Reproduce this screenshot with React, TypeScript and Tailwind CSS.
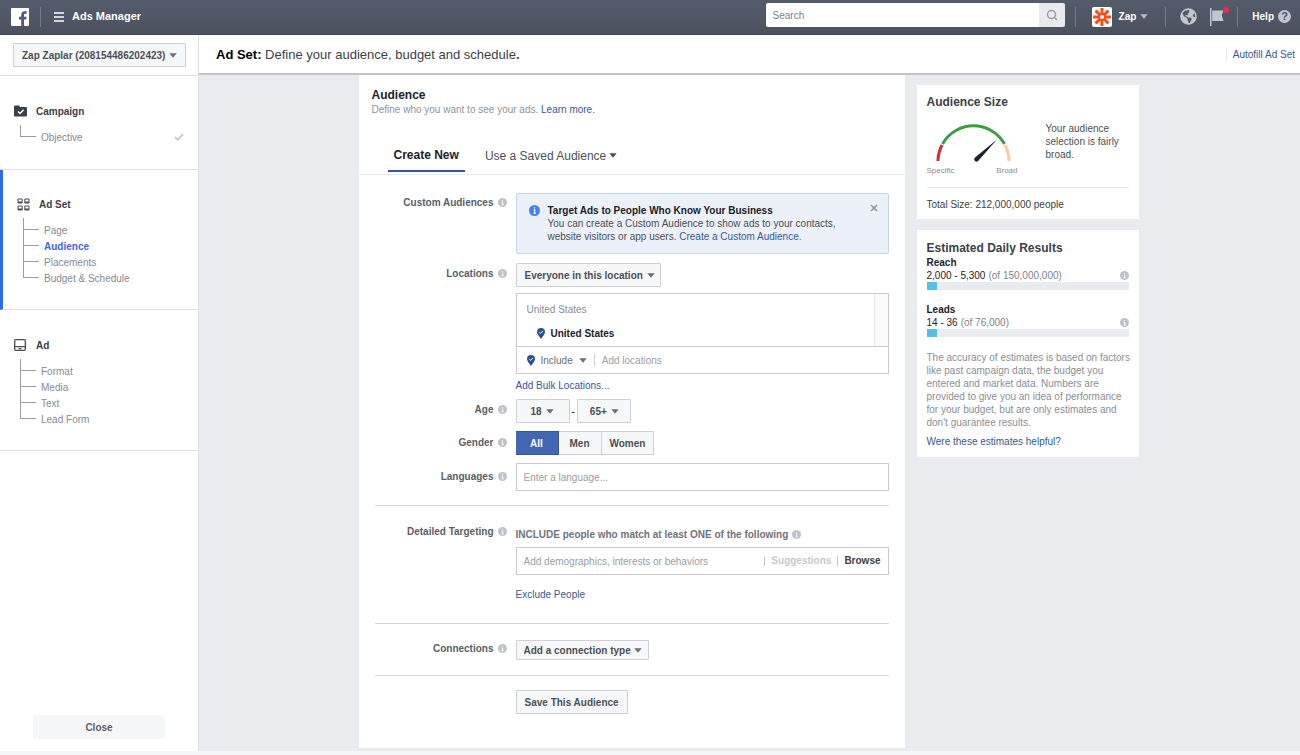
import type { ReactNode } from "react";
import { Search } from "lucide-react";
import { FaGlobeAmericas } from "react-icons/fa";

// ---------------------------------------------------------------------------
// Small shared pieces
// ---------------------------------------------------------------------------

function Caret({ className = "" }: { className?: string }) {
  return (
    <svg viewBox="0 0 8 5" className={`h-[5px] w-2 fill-current ${className}`}>
      <path d="M0.3 0.3h7.4L4 4.7z" />
    </svg>
  );
}

function InfoIcon({ className = "size-[9px] text-[#bec2c9]" }: { className?: string }) {
  return (
    <svg viewBox="0 0 10 10" className={`shrink-0 ${className}`}>
      <circle cx="5" cy="5" r="5" fill="currentColor" />
      <path
        d="M5 2.1v1.1M4.2 4.5h1v3M4 7.7h2.2"
        stroke="#fff"
        strokeWidth="1.1"
        fill="none"
      />
    </svg>
  );
}

function PinIcon() {
  return (
    <svg viewBox="0 0 8 11" className="h-[11px] w-2 shrink-0">
      <path
        d="M4 0a4 4 0 0 1 4 4c0 2.4-2.6 4.4-4 7C2.6 8.4 0 6.4 0 4a4 4 0 0 1 4-4z"
        fill="#2f4f94"
      />
      <path d="M2.2 4l1.4 1.4L6 2.8" stroke="#fff" fill="none" />
    </svg>
  );
}

interface DropdownProps {
  id?: string;
  label: string;
  options: string[];
  className: string;
  caretClassName: string;
}

function Dropdown({ id, label, options, className, caretClassName }: DropdownProps) {
  return (
    <div className="relative inline-flex items-center">
      <select
        id={id}
        aria-label={label}
        className={`appearance-none rounded-[1px] border border-[#ced0d4] bg-[#f6f7f9] font-bold text-[#4b4f56] ${className}`}
      >
        {options.map((option) => (
          <option key={option}>{option}</option>
        ))}
      </select>
      <Caret
        className={`pointer-events-none absolute text-[#6a6e76] ${caretClassName}`}
      />
    </div>
  );
}

// ---------------------------------------------------------------------------
// Top bar
// ---------------------------------------------------------------------------

function TopBar() {
  return (
    <header className="flex h-[35px] items-center border-b border-[#434956] bg-linear-to-b from-[#545c6c] to-[#4c515e] pr-[9px] pb-px pl-[11px] font-bold text-white">
      <a href="#" aria-label="Facebook">
        <svg viewBox="0 0 18 18" className="size-[18px]">
          <rect width="18" height="18" rx="1" fill="#fff" />
          <path
            d="M10.2 18v-6.6H8V8.7h2.2V6.9c0-2.4 1.4-3.7 3.6-3.7.9 0 1.6.1 1.9.1v2.4h-1.3c-1.2 0-1.4.6-1.4 1.4v1.6h2.6l-.4 2.7H13V18z"
            fill="#4a5a86"
          />
        </svg>
      </a>
      <span className="ml-[11px] h-5 w-px bg-[#747b89]" />
      <button aria-label="Menu" className="ml-[13px]">
        <svg viewBox="0 0 10 10" className="size-[10px]">
          <path d="M0 1h10M0 5h10M0 9h10" stroke="#fff" strokeWidth="1.4" />
        </svg>
      </button>
      <span className="ml-2 text-[11px]">Ads Manager</span>

      <form className="mb-[3px] ml-auto flex h-6">
        <input
          aria-label="Search"
          placeholder="Search"
          className="w-[273px] rounded-l-xs bg-white px-[7px] font-normal text-gray-800 placeholder:text-[#7b7f86]"
        />
        <button
          type="button"
          aria-label="Submit search"
          className="flex w-[26px] items-center justify-center rounded-r-xs bg-[#e9eaed] text-[#9a9da3]"
        >
          <Search className="size-3" strokeWidth={3} />
        </button>
      </form>
      <span className="ml-[10px] h-5 w-px bg-[#747b89]" />
      <button className="ml-4 flex items-center">
        <svg viewBox="0 0 20 20" className="size-5">
          <rect width="20" height="20" rx="2" fill="#fff" />
          <path
            d="M10 1v18M1 10h18M3.600 3.600l12.800 12.800M16.400 3.600L3.600 16.400"
            stroke="#f4501e"
            strokeWidth="3"
          />
          <circle cx="10" cy="10" r="2" fill="#fff" />
        </svg>
        <span className="ml-[7px]">Zap</span>
        <Caret className="ml-1 text-[#b9bdc6]" />
      </button>
      <span className="ml-[17px] h-5 w-px bg-[#747b89]" />
      <button aria-label="Notifications" className="ml-[14px] text-[#c3c6cd]">
        <FaGlobeAmericas className="size-[17px]" />
      </button>
      <button aria-label="Account alerts" className="relative ml-3">
        <svg viewBox="0 0 16 18" className="h-[18px] w-4">
          <path
            d="M1 0h1.500v18H1zM3.200 2.500H14.500l-1.800 4.800L14.500 13H3.200z"
            fill="#c3c6cd"
          />
        </svg>
        <span className="absolute -top-px -right-1 size-[6px] rounded-full bg-[#f02849]" />
      </button>
      <span className="ml-3 h-5 w-px bg-[#747b89]" />
      <button className="ml-[14px] flex items-center gap-1">
        Help
        <span className="flex size-[13px] items-center justify-center rounded-full bg-[#c3c6cd] text-[11px] leading-none text-[#4e5462]">
          ?
        </span>
      </button>
    </header>
  );
}

// ---------------------------------------------------------------------------
// Sidebar
// ---------------------------------------------------------------------------

interface StepProps {
  title: string;
  icon: ReactNode;
  items: string[];
  active?: string;
  done?: string;
  className: string;
}

function Step({ title, icon, items, active, done, className }: StepProps) {
  return (
    <section className={`border-b border-[#dddfe2] pr-[14px] ${className}`}>
      <h2 className="flex h-4 items-center font-bold text-[#3c4048]">
        {icon}
        {title}
      </h2>
      <ul className="ml-[6px]">
        <li aria-hidden className="mt-[6px] h-1 border-l border-[#9a9da4]" />
        {items.map((item, idx) => (
          <li key={item} className="flex h-4 items-center">
            <span className="mr-[5px] flex w-4 flex-col">
              <span className="h-2 border-b border-l border-[#9a9da4]" />
              <span
                className={
                  idx < items.length - 1 ? "h-2 border-l border-[#9a9da4]" : "h-2"
                }
              />
            </span>
            <a
              href="#"
              className={
                item === active ? "font-bold text-[#3b66e8]" : "text-[#858a93]"
              }
            >
              {item}
            </a>
            {item === done && (
              <svg viewBox="0 0 10 8" className="ml-auto h-2 w-[10px]">
                <path
                  d="M1 4l2.800 2.800L9 1.200"
                  stroke="#c4c7cc"
                  strokeWidth="1.800"
                  fill="none"
                />
              </svg>
            )}
          </li>
        ))}
      </ul>
    </section>
  );
}

function Sidebar() {
  return (
    <aside className="flex w-[199px] shrink-0 flex-col border-r border-[#dcdee2] bg-white">
      <div className="flex h-[41px] items-center border-b border-[#dddfe2] pl-[13px]">
        <Dropdown
          label="Account"
          options={["Zap Zaplar (208154486202423)"]}
          className="h-6 w-[173px] pl-2"
          caretClassName="right-[9px]"
        />
      </div>
      <nav>
        <Step
          title="Campaign"
          items={["Objective"]}
          done="Objective"
          className="h-[94px] pt-[27px] pl-[14px]"
          icon={
            <svg viewBox="0 0 13 12" className="mr-[9px] h-3 w-[13px]">
              <path
                d="M0 1.500Q0 .5 1 .5h4l1.200 1.500H12q1 0 1 1v7.500q0 1-1 1H1q-1 0-1-1z"
                fill="#3c4048"
              />
              <path
                d="M4 6.500l2 2 3.600-3.800"
                stroke="#fff"
                strokeWidth="1.300"
                fill="none"
              />
            </svg>
          }
        />
        <Step
          title="Ad Set"
          items={["Page", "Audience", "Placements", "Budget & Schedule"]}
          active="Audience"
          className="h-[140px] border-l-3 border-l-[#2d6be8] pt-[26px] pl-[14px]"
          icon={
            <svg
              viewBox="0 0 13 13"
              className="mr-[9px] size-[13px]"
              fill="none"
              stroke="#4b4f56"
            >
              <path d="M1 1h4.200v4H1zM7.800 1H12v4H7.800zM1 8h4.200v4H1zM7.800 8H12v4H7.800z" />
              <path
                d="M1 4.200h4.200M7.800 4.200H12M1 11.200h4.200M7.800 11.200H12"
                strokeWidth="1.500"
              />
            </svg>
          }
        />
        <Step
          title="Ad"
          items={["Format", "Media", "Text", "Lead Form"]}
          className="h-[141px] pt-[27px] pl-[14px]"
          icon={
            <svg
              viewBox="0 0 12 12"
              className="mr-[10px] size-3"
              fill="none"
              stroke="#4b4f56"
            >
              <rect x=".7" y=".7" width="10.600" height="10.600" rx="1" strokeWidth="1.300" />
              <path d="M1 7.700h10M4.500 9.700h3" strokeWidth="1.200" />
            </svg>
          }
        />
      </nav>
      <button className="mx-[33px] mt-auto mb-3 h-6 rounded-xs bg-[#f5f6f7] font-bold text-[#5b5f68]">
        Close
      </button>
    </aside>
  );
}

// ---------------------------------------------------------------------------
// Audience form
// ---------------------------------------------------------------------------

interface RowProps {
  id: string;
  label: string;
  className?: string;
  labelClassName?: string;
  children: ReactNode;
}

function Row({ id, label, className = "", labelClassName = "", children }: RowProps) {
  return (
    <div className={`grid grid-cols-[132px_1fr] gap-x-[9px] ${className}`}>
      <label
        id={`${id}-label`}
        htmlFor={id}
        className={`flex h-4 items-center justify-end gap-1 font-bold text-[#5a5e66] ${labelClassName}`}
      >
        {label}
        <InfoIcon />
      </label>
      <div>{children}</div>
    </div>
  );
}

function GenderPicker() {
  return (
    <div
      id="gender"
      role="radiogroup"
      aria-labelledby="gender-label"
      className="flex h-6 w-fit font-bold text-[#4b4f56]"
    >
      {["All", "Men", "Women"].map((gender) => (
        <label
          key={gender}
          className="relative flex min-w-[43px] items-center justify-center border border-l-0 border-[#ced0d4] bg-[#f6f7f9] px-2 has-checked:border-[#365899] has-checked:bg-[#4267b2] has-checked:text-white"
        >
          <input
            type="radio"
            name="gender"
            defaultChecked={gender === "All"}
            className="absolute inset-0 appearance-none"
          />
          <span className="relative">{gender}</span>
        </label>
      ))}
    </div>
  );
}

function AudienceForm() {
  return (
    <main className="w-[546px] bg-white pb-[34px]">
      <div className="px-[13px] pt-3">
        <h2 className="text-xs font-bold text-[#1d2129]">Audience</h2>
        <p className="text-[#90949c]">
          Define who you want to see your ads.{" "}
          <a href="#" className="text-[#365899]">
            Learn more.
          </a>
        </p>
      </div>

      <div className="mt-[23px] flex h-9 items-start border-b border-[#e9eaed] pl-[29px] text-xs">
        <button className="h-[33px] border-b-2 border-[#2f55a4] px-[6px] font-bold text-[#1d2129]">
          Create New
        </button>
        <button className="ml-5 flex h-[33px] items-center gap-[3px] text-[#4b4f56]">
          Use a Saved Audience <Caret />
        </button>
      </div>

      <div className="px-4">
        <Row
          id="custom-audiences"
          label="Custom Audiences"
          className="pt-[18px]"
          labelClassName="mt-px"
        >
          <div
            id="custom-audiences"
            className="relative flex gap-2 rounded-xs border border-[#c5d3ec] bg-[#ecf0f9] py-[10px] pr-8 pl-3"
          >
            <InfoIcon className="mt-px size-[11px] text-[#4080ff]" />
            <div className="text-[#4b4f56]">
              <h3 className="font-bold text-[#1d2129]">
                Target Ads to People Who Know Your Business
              </h3>
              <p>
                You can create a Custom Audience to show ads to your contacts,
                <br />
                website visitors or app users.{" "}
                <a href="#" className="text-[#365899]">
                  Create a Custom Audience.
                </a>
              </p>
            </div>
            <button aria-label="Dismiss" className="absolute top-[10px] right-[10px]">
              <svg viewBox="0 0 8 8" className="size-2">
                <path d="M1 1l6 6M7 1L1 7" stroke="#8d929b" strokeWidth="1.600" />
              </svg>
            </button>
          </div>
        </Row>

        <Row
          id="location-type"
          label="Locations"
          className="mt-[9px]"
          labelClassName="mt-[2px]"
        >
          <Dropdown
            id="location-type"
            label="Location type"
            options={["Everyone in this location"]}
            className="h-6 w-[145px] pl-2"
            caretClassName="right-[6px]"
          />
          <div className="mt-[6px] border border-[#c9ccd6]">
            <div className="flex h-[52px]">
              <div className="flex-1 pt-[9px] pl-[10px]">
                <p className="text-[#8a8e96]">United States</p>
                <p className="mt-[11px] flex items-center gap-[6px] pl-[10px] font-bold text-[#1d2129]">
                  <PinIcon />
                  United States
                </p>
              </div>
              <div className="w-[14px] border-l border-[#e4e5e8] bg-[#fafafa]" />
            </div>
            <div className="flex h-[27px] items-center border-t border-[#c9ccd6] pl-[10px]">
              <PinIcon />
              <button className="ml-[6px] flex items-center gap-[6px] text-[#6a6e76]">
                Include <Caret />
              </button>
              <span className="ml-[7px] h-3 w-px bg-[#ccd0d6]" />
              <input
                aria-label="Add locations"
                placeholder="Add locations"
                className="min-w-0 flex-1 px-[7px] placeholder:text-[#9a9da4]"
              />
            </div>
          </div>
          <a href="#" className="mt-[5px] block text-[#365899]">
            Add Bulk Locations...
          </a>
        </Row>

        <Row id="age" label="Age" className="mt-[7px]" labelClassName="mt-[2px]">
          <div className="flex items-center gap-[2px]">
            <Dropdown
              id="age"
              label="Minimum age"
              options={["18", "21", "25"]}
              className="h-6 w-[54px] pl-[14px]"
              caretClassName="right-4"
            />
            -
            <Dropdown
              label="Maximum age"
              options={["65+", "64", "60"]}
              className="h-6 w-[54px] pl-3"
              caretClassName="right-3"
            />
          </div>
        </Row>

        <Row id="gender" label="Gender" className="mt-2" labelClassName="mt-[3px]">
          <GenderPicker />
        </Row>

        <Row id="languages" label="Languages" className="mt-2" labelClassName="mt-[5px]">
          <input
            id="languages"
            placeholder="Enter a language..."
            className="block h-7 w-full border border-[#c9ccd6] px-[7px] placeholder:text-[#9a9da4]"
          />
        </Row>

        <hr className="mt-[14px] border-[#d8dade]" />

        <Row id="targeting" label="Detailed Targeting" className="mt-[17px]">
          <p className="mt-[5px] flex items-center gap-1 font-bold text-[#6f737b]">
            INCLUDE people who match at least ONE of the following
            <InfoIcon />
          </p>
          <div className="mt-[6px] flex h-7 items-center border border-[#c9ccd6] pr-[7px] font-bold">
            <input
              id="targeting"
              placeholder="Add demographics, interests or behaviors"
              className="min-w-0 flex-1 px-[7px] font-normal placeholder:text-[#9a9da4]"
            />
            <button className="border-l border-[#c4c7cc] px-[6px] leading-[10px] text-[#c7cad0]">
              Suggestions
            </button>
            <button className="border-l border-[#c4c7cc] pl-[6px] leading-[10px] text-[#3c4048]">
              Browse
            </button>
          </div>
          <a href="#" className="mt-[13px] block text-[#365899]">
            Exclude People
          </a>
        </Row>

        <hr className="mt-[22px] border-[#d8dade]" />

        <Row id="connections" label="Connections" className="mt-4">
          <Dropdown
            id="connections"
            label="Connection type"
            options={["Add a connection type"]}
            className="h-5 w-[133px] pl-[7px]"
            caretClassName="right-[7px]"
          />
        </Row>

        <hr className="mt-[15px] border-[#d8dade]" />

        <button className="mt-[14px] ml-[141px] block h-6 rounded-[1px] border border-[#ced0d4] bg-[#f6f7f9] px-2 font-bold text-[#4b4f56]">
          Save This Audience
        </button>
      </div>
    </main>
  );
}

// ---------------------------------------------------------------------------
// Right column
// ---------------------------------------------------------------------------

interface EstimateProps {
  name: string;
  range: string;
  total: string;
  percent: number;
}

function Estimate({ name, range, total, percent }: EstimateProps) {
  return (
    <div>
      <h3 className="font-bold text-[#1d2129]">{name}</h3>
      <p className="flex items-center gap-[3px] text-[#1d2129]">
        {range} <span className="text-[#7f838b]">(of {total})</span>
        <InfoIcon className="ml-auto size-[9px] text-[#bec2c9]" />
      </p>
      <div className="h-2 bg-[#e9ebee]">
        <div className="h-2 bg-[#54c0e8]" style={{ width: `${percent}%` }} />
      </div>
    </div>
  );
}

function Insights() {
  return (
    <aside className="flex w-[222px] flex-col gap-[11px] pt-[10px]">
      <section className="bg-white px-[10px] pt-[9px] pb-2">
        <h2 className="text-xs font-bold text-[#3c4048]">Audience Size</h2>
        <div className="mt-2 flex items-start justify-between">
          <div className="w-[91px] text-[8px] leading-[10px] text-[#8a8e96]">
            <svg viewBox="0 0 91 46" className="h-[46px] w-[91px]" fill="none">
              <path d="M11 43A35.500 35.500 0 0 1 15 27" stroke="#d92b2b" strokeWidth="3" />
              <path d="M15.500 26A35.500 35.500 0 0 1 77.500 26" stroke="#3c9d46" strokeWidth="3" />
              <path d="M78 27A35.500 35.500 0 0 1 82 43" stroke="#fbcb98" strokeWidth="3" />
              <path
                d="M70 21.500L51.300 42.800Q49.500 44.500 47.800 43Q46.400 41.200 48 39.600z"
                fill="#1d2129"
              />
            </svg>
            <div className="mt-[2px] flex justify-between">
              <span>Specific</span>
              <span>Broad</span>
            </div>
          </div>
          <p className="mt-1 w-[83px] text-[#4b4f56]">
            Your audience selection is fairly broad.
          </p>
        </div>
        <hr className="mt-[11px] border-[#e5e5e8]" />
        <p className="mt-[10px] text-[#3c4048]">Total Size: 212,000,000 people</p>
      </section>

      <section className="bg-white px-[10px] pt-[10px] pb-[9px]">
        <h2 className="text-xs font-bold text-[#3c4048]">
          Estimated Daily Results
        </h2>
        <div className="flex flex-col gap-[13px]">
          <Estimate name="Reach" range="2,000 - 5,300" total="150,000,000" percent={5} />
          <Estimate name="Leads" range="14 - 36" total="76,000" percent={5} />
        </div>
        <p className="mt-[14px] -mr-[6px] text-[#8a8e96]">
          The accuracy of estimates is based on factors like past campaign data,
          the budget you entered and market data. Numbers are provided to give
          you an idea of performance for your budget, but are only estimates and
          don't guarantee results.
        </p>
        <a href="#" className="mt-[6px] block text-[#365899]">
          Were these estimates helpful?
        </a>
      </section>
    </aside>
  );
}

export default function App() {
  return (
    <div className="flex min-h-screen flex-col border-b-4 border-[#f5f6f7] bg-[#e9ebee] font-['Liberation_Sans',Arial,sans-serif] text-[10px] leading-[13px]">
      <TopBar />
      <div className="flex flex-1">
        <Sidebar />
        <div className="flex flex-1 flex-col">
          <div className="flex h-10 items-center justify-between border-b-2 border-[#c3c4c9] bg-white pr-[5px] pl-[17px]">
            <h1 className="text-[13px] text-[#3c4048]">
              <b className="text-black">Ad Set:</b> Define your audience, budget and
              schedule<b>.</b>
            </h1>
            <a href="#" className="border-l border-[#e9eaed] pl-[6px] text-[#365899]">
              Autofill Ad Set
            </a>
          </div>
          <div className="flex items-start justify-center gap-3 pr-[2px]">
            <AudienceForm />
            <Insights />
          </div>
        </div>
      </div>
    </div>
  );
}
